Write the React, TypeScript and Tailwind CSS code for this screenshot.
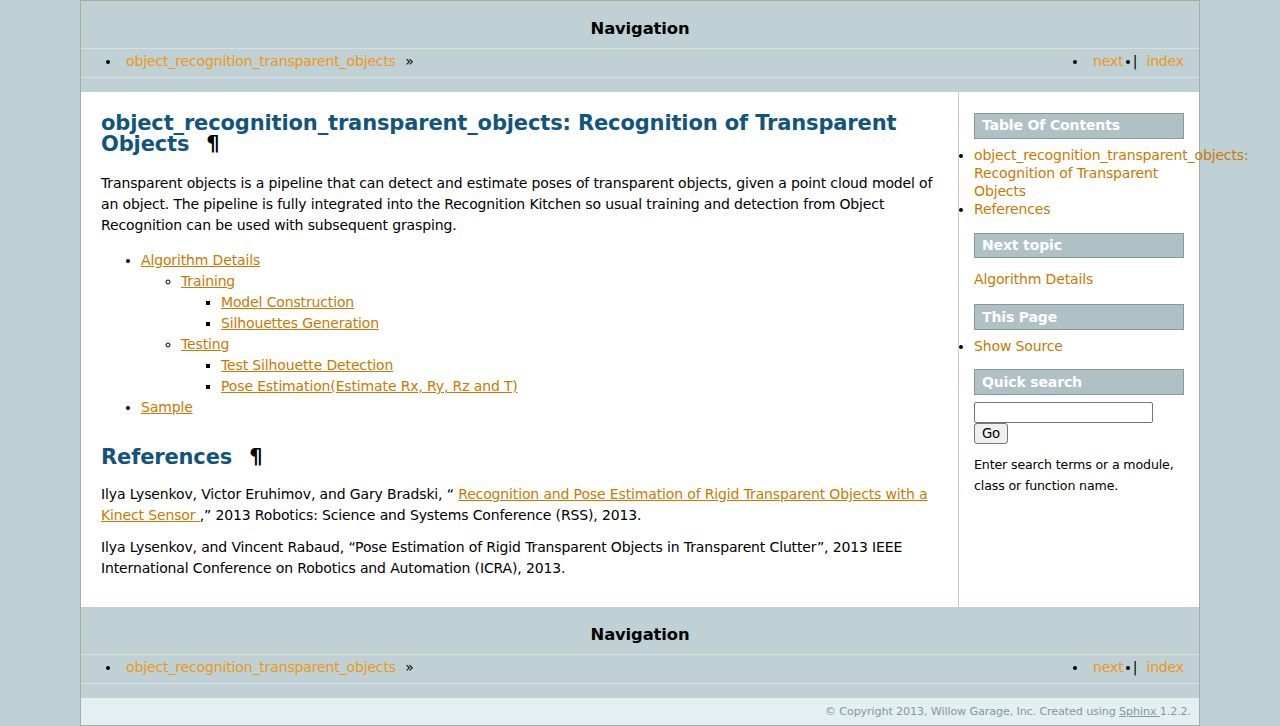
const navLink = "px-[5px] text-[#EE9816] hover:text-[#3CA8E7]";
const bodyLink = "text-[#CA7900] underline";
const sideHead =
  "mt-[14px] mb-[7px] border border-[#86989B] bg-[#AFC1C4] py-[1.4px] pl-[7px] text-[14px] font-bold leading-[21px] text-white";

function Related() {
  return (
    <div>
      <h3 className="pt-[17px] pb-[9px] text-center text-[16.4px] font-bold leading-[21px] text-black">
        Navigation
      </h3>
      <ul className="mb-[14px] flex h-[30px] list-disc border-y border-[#ddd] pl-10 pr-[5px] leading-[24.5px]">
        <li>
          <a href="#" className={navLink}>
            object_recognition_transparent_objects
          </a>{" "}
          »
        </li>
        <li className="mr-[4px] ml-auto">
          <a href="#" className={navLink}>
            next
          </a>{" "}
          |
        </li>
        <li className="mr-[5px]">
          <a href="#" className={navLink}>
            index
          </a>
        </li>
      </ul>
    </div>
  );
}

function HeaderLink() {
  return <span className="ml-[17px] font-bold text-black">¶</span>;
}

function Sidebar() {
  return (
    <div className="w-[240px] shrink-0 pt-[7px] pr-[15px] pl-[15px] text-left">
      <h3 className={sideHead}>Table Of Contents</h3>
      <ul className="list-disc leading-[18.2px]">
        <li>
          <a href="#" className="text-[#CA7900]">
            object_recognition_transparent_objects: Recognition of Transparent Objects
          </a>
        </li>
        <li>
          <a href="#" className="text-[#CA7900]">
            References
          </a>
        </li>
      </ul>
      <h3 className={sideHead}>Next topic</h3>
      <p className="mt-[11px]">
        <a href="#" className="text-[#CA7900]">
          Algorithm Details
        </a>
      </p>
      <h3 className={sideHead}>This Page</h3>
      <ul className="list-disc leading-[18.2px]">
        <li>
          <a href="#" className="text-[#CA7900]">
            Show Source
          </a>
        </li>
      </ul>
      <h3 className={sideHead}>Quick search</h3>
      <form className="flex flex-col items-start" onSubmit={(e) => e.preventDefault()}>
        <input
          type="text"
          className="h-[21px] w-[179px] rounded-[2px] border border-[#767676] bg-white px-[2px] text-[13.3px]"
        />
        <button
          type="submit"
          className="h-[21px] w-[34px] rounded-[3px] border border-[#767676] bg-[#efefef] text-[13.3px] leading-[17px] text-black"
        >
          Go
        </button>
      </form>
      <p className="mt-[10px] text-[12.6px]">Enter search terms or a module, class or function name.</p>
    </div>
  );
}

function Body() {
  return (
    <div className="min-w-0 flex-1 border-r border-[#ccc] px-[20px] pt-[21px] pb-[28px] text-left">
      <h1 className="text-[21px] font-bold leading-[21px] text-[#11557C]">
        object_recognition_transparent_objects: Recognition of Transparent Objects
        <HeaderLink />
      </h1>
      <p className="mt-[18px]">
        Transparent objects is a pipeline that can detect and estimate poses of transparent objects, given a point
        cloud model of an object. The pipeline is fully integrated into the Recognition Kitchen so usual training and
        detection from Object Recognition can be used with subsequent grasping.
      </p>
      <ul className="my-[14px] list-disc pl-10">
        <li>
          <a href="#" className={bodyLink}>
            Algorithm Details
          </a>
          <ul className="list-[circle] pl-10">
            <li>
              <a href="#" className={bodyLink}>
                Training
              </a>
              <ul className="list-[square] pl-10">
                <li>
                  <a href="#" className={bodyLink}>
                    Model Construction
                  </a>
                </li>
                <li>
                  <a href="#" className={bodyLink}>
                    Silhouettes Generation
                  </a>
                </li>
              </ul>
            </li>
            <li>
              <a href="#" className={bodyLink}>
                Testing
              </a>
              <ul className="list-[square] pl-10">
                <li>
                  <a href="#" className={bodyLink}>
                    Test Silhouette Detection
                  </a>
                </li>
                <li>
                  <a href="#" className={bodyLink}>
                    Pose Estimation(Estimate Rx, Ry, Rz and T)
                  </a>
                </li>
              </ul>
            </li>
          </ul>
        </li>
        <li>
          <a href="#" className={bodyLink}>
            Sample
          </a>
        </li>
      </ul>
      <h2 className="mt-[29px] text-[21px] font-bold leading-[21px] text-[#11557C]">
        References
        <HeaderLink />
      </h2>
      <p className="mt-[16px]">
        Ilya Lysenkov, Victor Eruhimov, and Gary Bradski, “{" "}
        <a href="#" className={bodyLink}>
          Recognition and Pose Estimation of Rigid Transparent Objects with a Kinect Sensor{" "}
        </a>
        ,” 2013 Robotics: Science and Systems Conference (RSS), 2013.
      </p>
      <p className="mt-[11px]">
        Ilya Lysenkov, and Vincent Rabaud, “Pose Estimation of Rigid Transparent Objects in Transparent Clutter”, 2013
        IEEE International Conference on Robotics and Automation (ICRA), 2013.
      </p>
    </div>
  );
}

export default function App() {
  return (
    <div className="min-h-screen bg-[#BFD1D4] font-['DejaVu_Sans',sans-serif] text-[14px] leading-[21px] tracking-[-0.01em] text-black">
      <div className="mx-[80px] border border-[#aaa] text-center">
        <Related />
        <div className="flex bg-white">
          <Body />
          <Sidebar />
        </div>
        <Related />
        <div className="bg-[#E3EFF1] py-[3px] pr-[8px] text-right text-[11.2px] text-[#86989B]">
          © Copyright 2013, Willow Garage, Inc. Created using{" "}
          <a href="#" className="text-[#86989B] underline">
            Sphinx{" "}
          </a>
          1.2.2.
        </div>
      </div>
    </div>
  );
}
